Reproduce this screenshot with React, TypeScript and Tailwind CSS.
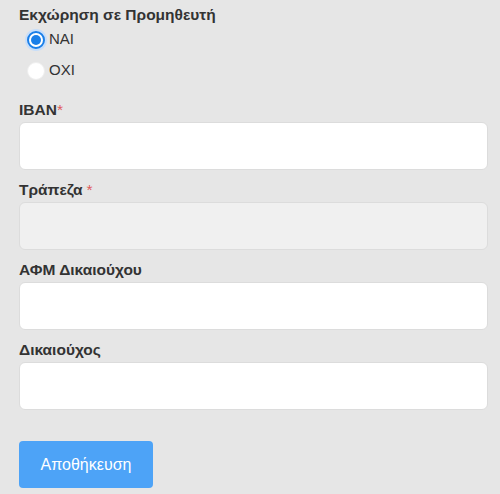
import React, { useState } from "react";

const Field = ({
  label,
  required,
  spaced,
  disabled,
}: {
  label: string;
  required?: boolean;
  spaced?: boolean;
  disabled?: boolean;
}) => {
  return (
    <div className="w-full mb-[10px]">
      <label className="block h-[20px] leading-[20px] text-[15.5px] font-bold text-[#333333] mb-[2px]">
        {label}
        {required && (
          <span className={`text-[#e05a5a] font-normal ${spaced ? "ml-[4px]" : ""}`}>*</span>
        )}
      </label>
      <input
        disabled={disabled}
        className={`w-full h-[48px] px-3 rounded-[6px] border border-[#dcdcdc] outline-none ${
          disabled ? "bg-[#f0f0f0]" : "bg-white"
        }`}
      />
    </div>
  );
};

const Radio = ({ checked, label, onClick }: { checked: boolean; label: string; onClick: () => void }) => {
  return (
    <button onClick={onClick} className="flex items-center h-[31px] gap-x-[4px] text-[15px] text-[#333333]">
      {checked ? (
        <span className="w-[18px] h-[18px] rounded-full border-[2px] border-[#1a7fe8] bg-white flex items-center justify-center shadow-[0_0_0_2px_#c7defa]">
          <span className="w-[10px] h-[10px] rounded-full bg-[#1a7fe8]" />
        </span>
      ) : (
        <span className="w-[18px] h-[18px] rounded-full bg-white border border-[#eeeeee]" />
      )}
      {label}
    </button>
  );
};

const App = () => {
  const [assign, setAssign] = useState(true);

  return (
    <div
      className="w-[500px] h-[494px] bg-[#e6e6e6] pl-[19px] pr-[12px] pt-[5px] overflow-hidden"
      style={{ fontFamily: '"Liberation Sans", Arial, sans-serif' }}
    >
      <h2 className="text-[15.5px] font-bold text-[#333333] leading-[20px]">Εκχώρηση σε Προμηθευτή</h2>

      <div className="flex flex-col items-start pl-[8px] mt-[-1px]">
        <Radio checked={assign} label="ΝΑΙ" onClick={() => setAssign(true)} />
        <Radio checked={!assign} label="ΟΧΙ" onClick={() => setAssign(false)} />
      </div>

      <div className="mt-[14px]">
        <Field label="IBAN" required />
        <Field label="Τράπεζα" required spaced disabled />
        <Field label="ΑΦΜ Δικαιούχου" />
        <Field label="Δικαιούχος" />
      </div>

      <button className="mt-[21px] w-[134px] h-[47px] rounded-[4px] bg-[#4da3f7] text-white text-[16px]">
        Αποθήκευση
      </button>
    </div>
  );
};

export default App;
